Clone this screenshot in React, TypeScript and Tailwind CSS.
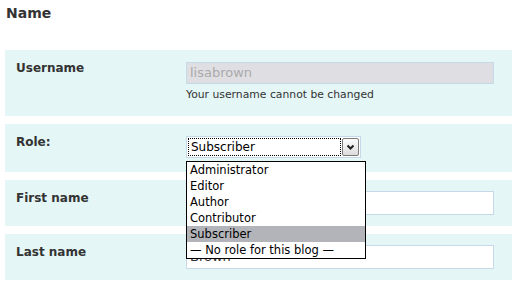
import { useState } from "react"

const roles = ["Administrator", "Editor", "Author", "Contributor", "Subscriber", "— No role for this blog —"]

function Row({ label, children, className }: { label: string; children?: React.ReactNode; className?: string }) {
  return (
    <div className={`flex bg-[#e4f6f6] pl-[11px] pt-[11px] ${className ?? ""}`}>
      <div className="w-[170px] shrink-0 text-[12px] font-bold leading-[15px] text-[#333]">{label}</div>
      <div className="flex-1">{children}</div>
    </div>
  )
}

function TextInput({ value, disabled, className }: { value: string; disabled?: boolean; className?: string }) {
  return (
    <div
      className={`flex w-[308px] items-center border border-[#c6d9e9] px-[3px] text-[13px] ${
        disabled ? "bg-[#dfdfe3] text-[#aaa]" : "bg-white text-[#333]"
      } ${className ?? ""}`}
    >
      {value}
    </div>
  )
}

export default function App() {
  const [selected] = useState("Subscriber")

  return (
    <div className="h-[285px] w-[517px] bg-white px-[5px] pt-[5px] font-['DejaVu_Sans',sans-serif] text-[#333]">
      <h3 className="ml-[1px] text-[14px] font-bold leading-[17px] text-[#333]">Name</h3>

      <div className="mt-[28px] flex flex-col gap-[8px]">
        <Row label="Username" className="h-[66px]">
          <TextInput value="lisabrown" disabled className="mt-[1px] h-[22px]" />
          <p className="mt-[4px] text-[10.8px] leading-[14px] text-[#333]">Your username cannot be changed</p>
        </Row>

        <Row label="Role:" className="h-[48px]">
          <div className="relative mt-[1px] w-[175px]">
            <div className="flex h-[22px] items-center border border-[#c6d9e9] bg-white p-[1px]">
              <div className="flex h-full flex-1 items-center border border-dotted border-black pl-[2px] text-[12px] leading-none text-black">
                {selected}
              </div>
              <div className="ml-[1px] flex h-[18px] w-[17px] items-center justify-center rounded-[2px] border border-[#7b7b7b] bg-gradient-to-b from-[#fdfdfd] to-[#dcdcdc]">
                <svg width="9" height="7" viewBox="0 0 9 7">
                  <path d="M1.5 1.5 L4.5 4.5 L7.5 1.5" fill="none" stroke="#222" strokeWidth="2" />
                </svg>
              </div>
            </div>
            <ul className="absolute left-0 top-[25px] z-10 w-[180px] border border-black bg-white text-[11.5px] text-black">
              {roles.map(r => (
                <li
                  key={r}
                  className={`flex h-[16px] items-center pl-[3px] pt-[2px] leading-none ${r === selected ? "bg-[#b3b4b9]" : ""}`}
                >
                  {r}
                </li>
              ))}
            </ul>
          </div>
        </Row>

        <Row label="First name" className="h-[46px]">
          <TextInput value="Lisa" className="h-[24px]" />
        </Row>

        <Row label="Last name" className="h-[46px]">
          <TextInput value="Brown" className="h-[24px]" />
        </Row>
      </div>
    </div>
  )
}
